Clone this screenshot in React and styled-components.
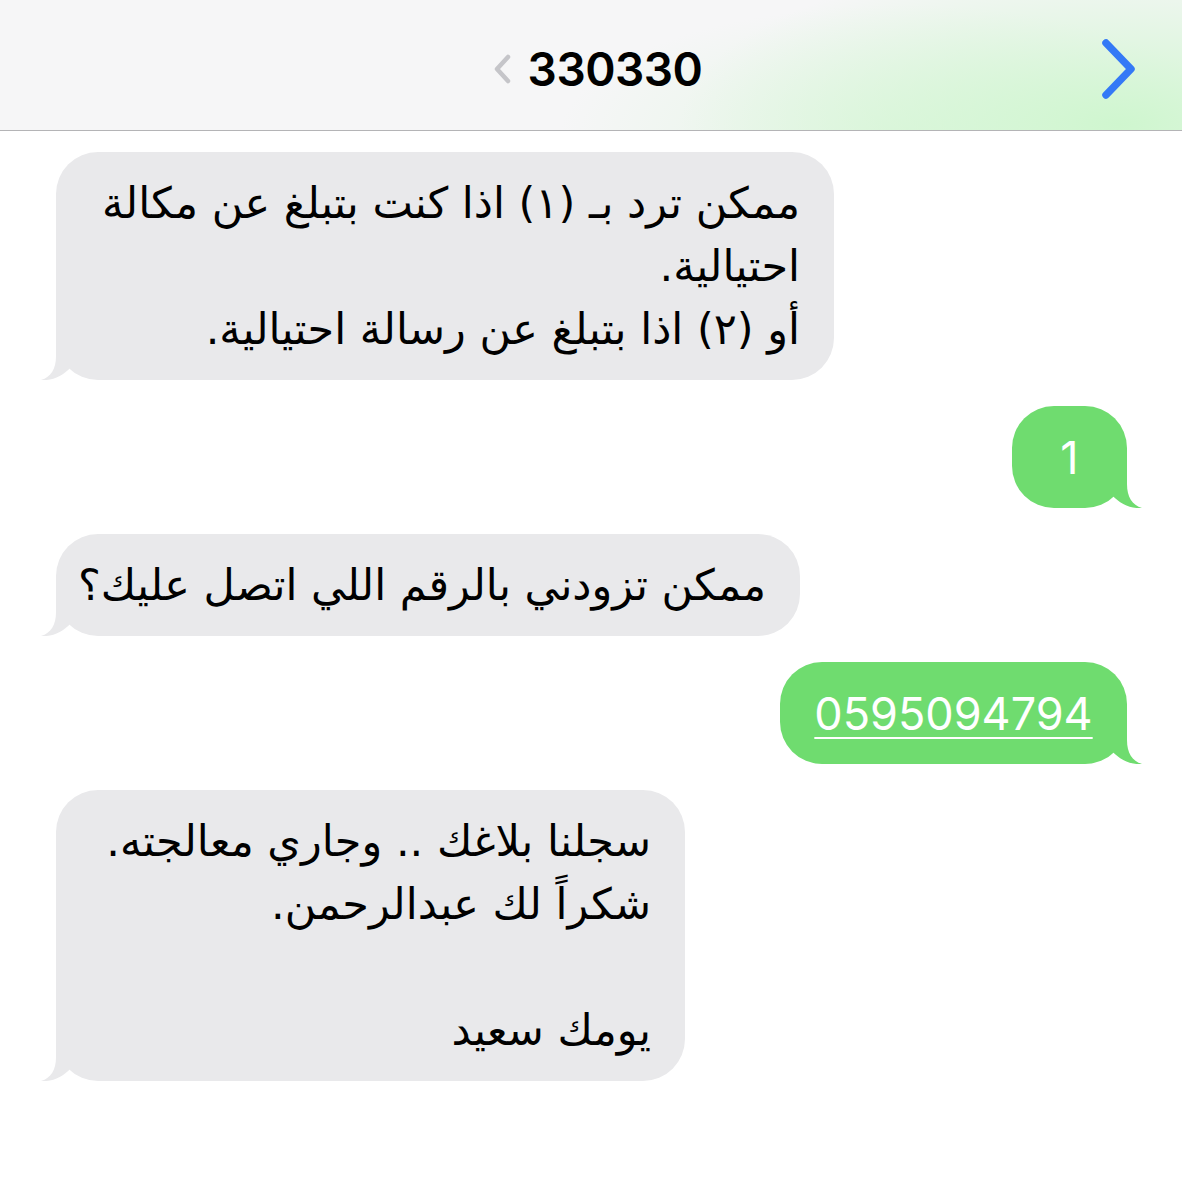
import styled, { createGlobalStyle } from "styled-components"

const Global = createGlobalStyle`
    body{
        margin: 0;
        background-color: #FFFFFF;
        font-family: "DejaVu Sans", sans-serif;
    }
`

const Tela = styled.div`
    width: 1182px;
    height: 1200px;
    overflow: hidden;
    background-color: #FFFFFF;
`

const Cabecalho = styled.header`
    height: 131px;
    display: grid;
    grid-template-columns: 1fr auto 1fr;
    align-items: center;
    box-sizing: border-box;
    border-bottom: 1px solid #B4B4B6;
    background:
        radial-gradient(ellipse 440px 170px at 1120px 125px, rgba(205, 246, 205, 0.95), rgba(205, 246, 205, 0) 100%),
        radial-gradient(ellipse 340px 130px at 900px 135px, rgba(220, 246, 220, 0.7), rgba(220, 246, 220, 0) 100%),
        #F6F6F7;
    .titulo{
        grid-column: 2;
        display: flex;
        align-items: center;
        gap: 16px;
        margin-left: 12px;
        padding-top: 8px;
    }
    .numero{
        font-family: Inter, "Liberation Sans", sans-serif;
        font-weight: 600;
        font-size: 46px;
        color: #000000;
        letter-spacing: -0.5px;
    }
    .avancar{
        justify-self: end;
        margin-right: 45px;
        display: flex;
        padding-top: 8px;
    }
`

const Conversa = styled.main`
    display: flex;
    flex-direction: column;
    gap: 26px;
    padding: 21px 55px 0 56px;
`

const Balao = styled.div`
    position: relative;
    align-self: ${props => props.$meu ? "flex-end" : "flex-start"};
    width: ${props => props.$w}px;
    box-sizing: border-box;
    padding: 19.5px 34px;
    border-radius: 42px;
    background-color: ${props => props.$meu ? "#6FDC6F" : "#E9E9EB"};
    color: ${props => props.$meu ? "#FFFFFF" : "#000000"};
    direction: ${props => props.$meu ? "ltr" : "rtl"};
    text-align: ${props => props.$meu ? "center" : "right"};
    font-family: ${props => props.$meu ? 'Inter, "Liberation Sans", sans-serif' : '"DejaVu Sans", sans-serif'};
    font-size: ${props => props.$meu ? 45 : 43}px;
    line-height: 63px;
    white-space: nowrap;
    .rabo{
        position: absolute;
        bottom: 0;
        ${props => props.$meu ? "right: -15px; transform: scaleX(-1);" : "left: -15px;"}
    }
    a{
        color: #FFFFFF;
        text-decoration: underline;
        text-decoration-thickness: 2px;
        text-underline-offset: 7px;
    }
`

const Linha = styled.div`
    min-height: 63px;
`

const Rabo = ({ cor }) => (
    <svg className="rabo" width="32" height="48" viewBox="0 0 32 48">
        <path d="M15 0 L15 24 C15 37 10 45 0 48 C11 49 22 44 30 35 L30 0 Z" fill={cor} />
    </svg>
)

const mensagens = [
    {
        meu: false, w: 778,
        linhas: ["ممكن ترد بـ (١) اذا كنت بتبلغ عن مكالة", "احتيالية.", "أو (٢) اذا بتبلغ عن رسالة احتيالية."]
    },
    { meu: true, w: 115, linhas: ["1"] },
    { meu: false, w: 744, linhas: ["ممكن تزودني بالرقم اللي اتصل عليك؟"] },
    { meu: true, w: 347, link: "0595094794" },
    {
        meu: false, w: 629,
        linhas: ["سجلنا بلاغك .. وجاري معالجته.", "شكراً لك عبدالرحمن.", "", "يومك سعيد"]
    },
]

const App = () => {
    return(
        <>
            <Global />
            <Tela>
                <Cabecalho>
                    <div className="titulo">
                        <svg width="20" height="30" viewBox="0 0 20 30">
                            <path d="M16 3 L5 15 L16 27" fill="none" stroke="#C5C5C9" strokeWidth="4.5" strokeLinecap="round" strokeLinejoin="round" />
                        </svg>
                        <span className="numero">330330</span>
                    </div>
                    <div className="avancar">
                        <svg width="36" height="60" viewBox="0 0 36 60">
                            <path d="M5 4 L30 30 L5 56" fill="none" stroke="#3479F6" strokeWidth="7.5" strokeLinecap="round" strokeLinejoin="round" />
                        </svg>
                    </div>
                </Cabecalho>
                <Conversa>
                    {mensagens.map((m, i) => (
                        <Balao key={i} $meu={m.meu} $w={m.w}>
                            {m.link
                                ? <Linha><a href="#">{m.link}</a></Linha>
                                : m.linhas.map((l, j) => <Linha key={j}>{l || "\u00a0"}</Linha>)}
                            <Rabo cor={m.meu ? "#6FDC6F" : "#E9E9EB"} />
                        </Balao>
                    ))}
                </Conversa>
            </Tela>
        </>
    )
}

export default App
